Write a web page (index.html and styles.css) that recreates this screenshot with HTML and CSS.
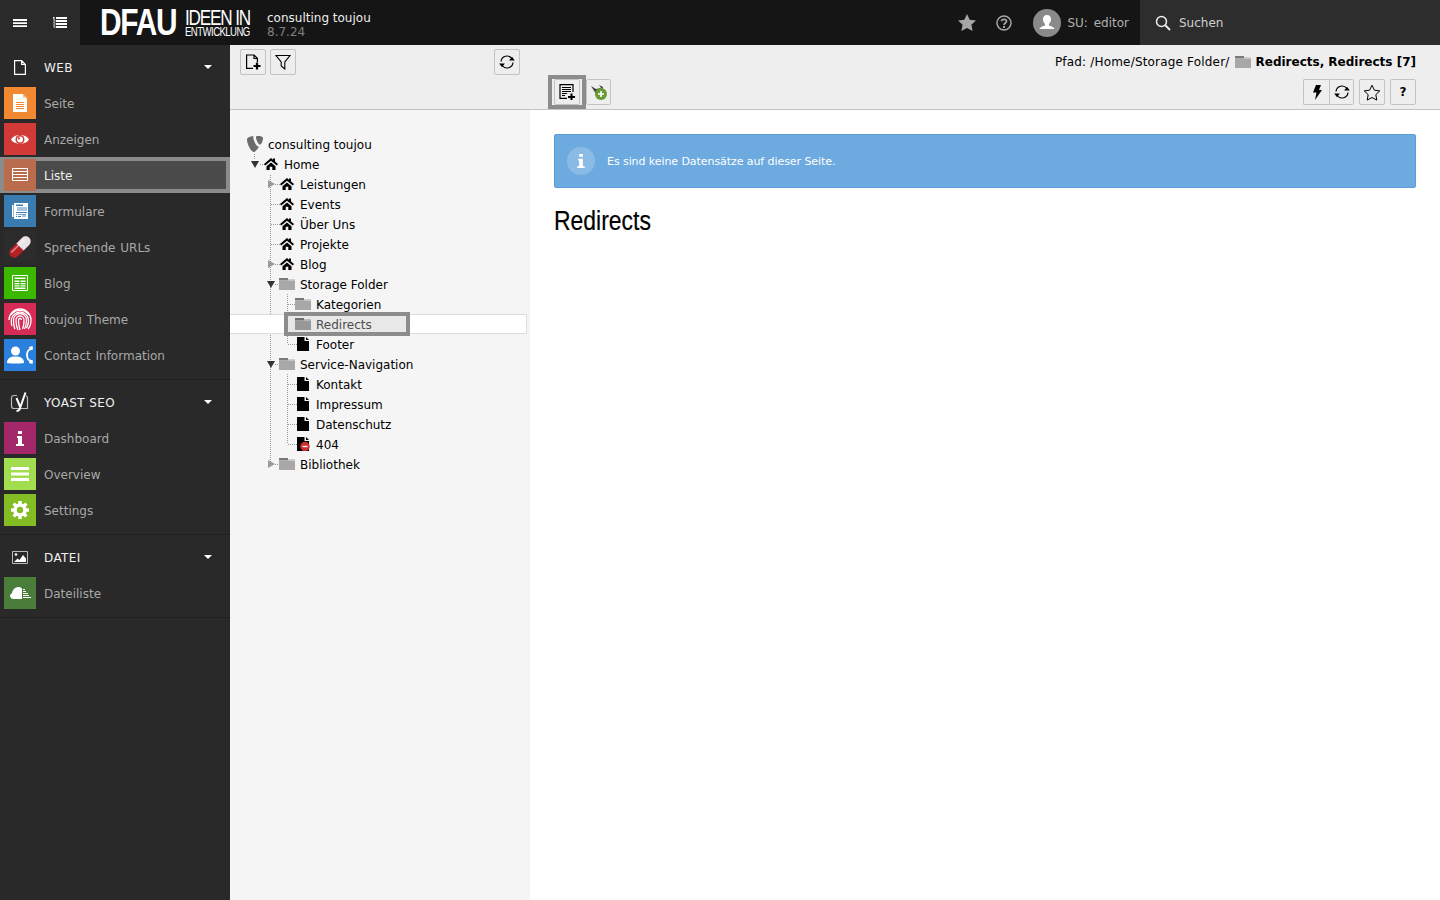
FILE: index.html
```html
<!DOCTYPE html>
<html lang="de">
<head>
<meta charset="utf-8">
<title>TYPO3 Liste</title>
<link rel="stylesheet" href="styles.css">
</head>
<body>
<svg class="defs" width="0" height="0">
  <defs>
    <symbol id="home" viewBox="0 0 14 12"><path fill="#000" d="M7 0 0 6l1.200 1.600L7 2.800l5.800 4.800L14 6l-3-2.600V.6H9v1.100z"/><path fill="#000" d="M2.500 8.200 7 4.400l4.500 3.800V12H8.300V8.800H5.700V12H2.500z"/></symbol>
    <symbol id="folder" viewBox="0 0 16 12"><path fill="#7a7a7a" d="M0 0h9v2.500H0z"/><path fill="#cfcfcf" d="M9 1h7v1.500H9z"/><path fill="#a8a8a8" d="M0 2.500h16V12H0z"/></symbol>
    <symbol id="page" viewBox="0 0 12 14"><path fill="#000" d="M0 0h7.500v4H12v10H0z"/><path fill="#000" d="M9 0l3 3H9z"/></symbol>
    <symbol id="sync" viewBox="0 0 16 16"><path fill="none" stroke="#000" stroke-width="1.200" d="M2 7.500A6 6 0 0 1 12.800 4.500M14 8.500A6 6 0 0 1 3.200 11.500"/><path fill="#000" d="M10.200 6.500h5.600L13 2.800zM.2 9.500h5.600L3 13.200z"/></symbol>
  </defs>
</svg>

<header class="topbar">
  <button class="toggle" type="button">
    <svg width="14" height="10" viewBox="0 0 14 10"><path fill="#fff" d="M0 1h14v2H0zM0 4.300h14v1.700H0zM0 7.300h14V9H0z"/></svg>
  </button>
  <button class="toggle" type="button">
    <svg width="14" height="14" viewBox="0 0 14 14"><path fill="#fff" d="M3 1h11v2H3zM3 4h11v2H3zM3 7h11v2H3zM3 10h11v2H3zM0 1h1.500v1H0zM.5 2v9h1v-9zM.5 4.500h2v1h-2zM.5 7.500h2v1h-2zM.5 10.500h2v1h-2z"/></svg>
  </button>
  <div class="logo">
    <span class="logo-main">DFAU</span>
    <span class="logo-side"><span class="logo-top">IDEEN IN</span><span class="logo-bottom">ENTWICKLUNG</span></span>
  </div>
  <div class="site">
    <span class="site-name">consulting toujou</span>
    <span class="site-version">8.7.24</span>
  </div>
  <div class="top-tools">
    <svg class="tool-star" width="18" height="17" viewBox="0 0 18 17"><path fill="#a6a6a6" d="M9 0l2.700 5.700 6.300.8-4.600 4.300 1.200 6.200L9 14l-5.600 3 1.200-6.200L0 6.500l6.300-.8z"/></svg>
    <svg class="tool-help" width="16" height="16" viewBox="0 0 16 16"><circle cx="8" cy="8" r="7" fill="none" stroke="#a6a6a6" stroke-width="1.500"/><path fill="none" stroke="#a6a6a6" stroke-width="1.700" d="M5.500 6.300C5.500 3.600 10.500 3.600 10.500 6.300 10.500 8 8 8 8 10"/><path fill="#a6a6a6" d="M7 11h2v2H7z"/></svg>
    <svg class="tool-avatar" width="28" height="28" viewBox="0 0 28 28"><circle cx="14" cy="14" r="14" fill="#8a8a8a"/><path fill="#fff" d="M14 6c-2.600 0-4 1.800-4 4.200 0 2 .8 3.600 2 4.600v1.700c-2 .8-5 1.300-5.500 3.500h15c-.5-2.200-3.500-2.700-5.500-3.500v-1.700c1.200-1 2-2.600 2-4.600C18 7.800 16.600 6 14 6z"/></svg>
    <span class="user">SU: editor</span>
  </div>
  <div class="search">
    <svg width="16" height="16" viewBox="0 0 16 16"><circle cx="6.500" cy="6.500" r="5" fill="none" stroke="#eee" stroke-width="1.500"/><path stroke="#eee" stroke-width="2" d="M10 10l5 5"/></svg>
    <span>Suchen</span>
  </div>
</header>

<div class="layout">
  <nav class="sidebar">
    <section class="group">
      <div class="group-head">
        <span class="head-icon"><svg width="12" height="15" viewBox="0 0 12 15"><path fill="none" stroke="#fff" stroke-width="1.200" d="M.600.600h7l3.800 3.800v10H.600zM7.600.600v3.800h3.800"/></svg></span>
        <span class="head-label">WEB</span><span class="caret"></span>
      </div>
      <div class="item">
        <span class="mod mod-seite"><svg width="14" height="18" viewBox="0 0 14 18"><path fill="#fff" d="M0 0h9.500L14 4.500V18H0z"/><path fill="#f3c39a" d="M10 0l4 4h-4z"/><path stroke="#f18933" d="M3 8.500h8M3 10.500h8M3 12.500h8M3 14.500h8"/></svg></span>
        <span class="label">Seite</span>
      </div>
      <div class="item">
        <span class="mod mod-anzeigen"><svg width="18" height="13" viewBox="0 0 20 14"><path fill="#fff" d="M0 7c4-6.500 16-6.500 20 0-4 6.500-16 6.500-20 0z"/><circle cx="10" cy="7" r="5" fill="#d13a37"/><circle cx="10" cy="7" r="3.300" fill="#fff"/><circle cx="8.800" cy="5.800" r="1.200" fill="#d13a37"/></svg></span>
        <span class="label">Anzeigen</span>
      </div>
      <div class="item item-active">
        <span class="mod mod-liste"><svg width="16" height="14" viewBox="0 0 16 14"><path fill="none" stroke="#fff" d="M.500.500h15v3H.500zM.500 3.500h15v3H.500zM.500 6.500h15v3H.500zM.500 9.500h15v3H.500z"/></svg></span>
        <span class="label">Liste</span>
      </div>
      <div class="item">
        <span class="mod mod-formulare"><svg width="16" height="16" viewBox="0 0 16 16"><path fill="#fff" d="M0 2h1.500v12H0zM2 0h14v16H2z"/><path fill="#3b7cb0" d="M4 1.500h7V3H4z"/><path fill="#a9c6de" d="M5 4h10v4H5zM10 12h4v2h-4z"/><path fill="#3b7cb0" d="M4 9h11v1H4zM6 11h8v.8H6zM4 11h1v1H4zM4 13h1v1H4zM6 13h3v1H6z"/></svg></span>
        <span class="label">Formulare</span>
      </div>
      <div class="item">
        <span class="mod mod-urls"><svg width="26" height="26" viewBox="0 0 26 26"><g transform="rotate(-45 13 13)"><rect x="0" y="8" width="26" height="10" rx="5" fill="#b52025"/><path fill="#e6e6e6" d="M13 8h8a5 5 0 0 1 0 10h-8z"/><path fill="#fff" opacity=".5" d="M3 10h18v1.500H3z"/></g></svg></span>
        <span class="label">Sprechende URLs</span>
      </div>
      <div class="item">
        <span class="mod mod-blog"><svg width="16" height="16" viewBox="0 0 16 16"><path fill="none" stroke="#fff" d="M.500.500h15v15H.500z"/><path fill="#fff" d="M2.500 2.500h11V4h-11zM2.500 5.500h5V7h-5zM2.500 8h5v1.300h-5zM2.500 10.300h5v1.300h-5zM8.500 5.500h5V7h-5zM8.500 8h5v1.300h-5zM8.500 10.300h5v1.300h-5zM2.500 12.500h11V14h-11z"/></svg></span>
        <span class="label">Blog</span>
      </div>
      <div class="item">
        <span class="mod mod-toujou"><svg width="26" height="26" viewBox="0 0 26 26"><g fill="none" stroke="#fff" stroke-width="1.300"><path d="M4 9a11 11 0 0 1 18 0"/><path d="M2 14a11 11 0 0 1 22 0c0 4-1 7-3 9"/><path d="M5 20c-1-2-1-4-.500-7a8.600 8.600 0 0 1 17 1c0 3-.500 6-2 8"/><path d="M8 23c-1.500-3-1.500-6-1.500-9a6.500 6.500 0 0 1 13 0c0 3-.500 6-2 9"/><path d="M11 24c-1.500-3-2-6-2-10a4 4 0 0 1 8 0c0 4-.500 7-1.500 9"/><path d="M13 24c-1-3-1.500-6-1.500-10a1.500 1.500 0 0 1 3 0"/></g></svg></span>
        <span class="label">toujou Theme</span>
      </div>
      <div class="item">
        <span class="mod mod-contact"><svg width="26" height="18" viewBox="0 0 26 18"><circle cx="8.500" cy="5" r="4.500" fill="#fff"/><path fill="#fff" d="M0 17c0-5 3.500-6.500 8.500-6.500S17 12 17 17c-5 .8-12 .8-17 0z"/><path fill="none" stroke="#fff" stroke-width="1.800" d="M23.500 3c-2.500 1-3.500 3.500-3.500 6s1 5 3.500 6"/><path fill="#fff" d="M22 1l3.500-1 .5 3.500-3 1zM22 17l3.500 1 .5-3.500-3-1z"/></svg></span>
        <span class="label">Contact Information</span>
      </div>
    </section>

    <section class="group">
      <div class="group-head">
        <span class="head-icon"><svg width="20" height="20" viewBox="0 0 20 20"><path fill="none" stroke="#bbb" stroke-width="1.200" d="M7 3.500H4a2.500 2.500 0 0 0-2.500 2.500v8A2.500 2.500 0 0 0 4 16.500h13.500V6a2.500 2.500 0 0 0-1.500-2.300"/><path fill="none" stroke="#fff" stroke-width="2" d="M6.500 6l3.500 8.500M15.500.500L9.500 17.500c-.500 1-1.500 1.500-3 1.500"/></svg></span>
        <span class="head-label">YOAST SEO</span><span class="caret"></span>
      </div>
      <div class="item">
        <span class="mod mod-dash"><svg width="8" height="15" viewBox="0 0 8 15"><path fill="#fff" d="M2 0h4v3H2zM1 5h5v8h2v2H0v-2h2V7H1z"/></svg></span>
        <span class="label">Dashboard</span>
      </div>
      <div class="item">
        <span class="mod mod-overview"><svg width="18" height="14" viewBox="0 0 18 14"><path fill="#fff" d="M0 0h18v3H0zM0 5.500h18v3H0zM0 11h18v3H0z"/></svg></span>
        <span class="label">Overview</span>
      </div>
      <div class="item">
        <span class="mod mod-settings"><svg width="18" height="18" viewBox="0 0 18 18"><circle cx="9" cy="9" r="5" fill="none" stroke="#fff" stroke-width="3.600"/><path stroke="#fff" stroke-width="3.400" d="M9 0v3.500M9 14.500V18M0 9h3.500M14.500 9H18M2.600 2.600l2.500 2.500M12.900 12.900l2.500 2.500M15.400 2.600l-2.500 2.500M5.100 12.900l-2.500 2.500"/></svg></span>
        <span class="label">Settings</span>
      </div>
    </section>

    <section class="group">
      <div class="group-head">
        <span class="head-icon"><svg width="16" height="13" viewBox="0 0 16 13"><path fill="none" stroke="#bbb" d="M.500.500h15v12H.500z"/><circle cx="4" cy="3.500" r="1.300" fill="#fff"/><path fill="#fff" d="M2 11l3.500-3.500 2 1.500 3.500-5 3 3.500V11z"/></svg></span>
        <span class="head-label">DATEI</span><span class="caret"></span>
      </div>
      <div class="item">
        <span class="mod mod-datei"><svg width="21" height="12" viewBox="0 0 21 12"><path fill="#fff" d="M3 12a3 3 0 0 1-1-5.800C2.500 2 6 0 8.500 0c1.500 0 2.500.500 3.500 1.500V12z"/><path stroke="#fff" d="M13 2.500h2M13 4.500h3M13 6.500h5M13 8.500h6M13 10.500h8"/></svg></span>
        <span class="label">Dateiliste</span>
      </div>
    </section>
  </nav>

  <main class="main">
    <div class="docheader">
      <div class="tree-tools">
        <button class="btn" type="button"><svg width="16" height="16" viewBox="0 0 16 16"><path fill="none" stroke="#000" stroke-width="1.200" d="M8 14.400H1.600V1h7.500l3.300 3.300V8M9 1v3.500h3.500"/><path stroke="#000" stroke-width="2.200" d="M8.500 12h7M12 8.500v7"/></svg></button>
        <button class="btn" type="button"><svg width="16" height="16" viewBox="0 0 16 16"><path fill="none" stroke="#000" stroke-width="1.100" d="M1 1.500h14L9.800 8v7l-3.600-3V8z"/></svg></button>
        <button class="btn btn-refresh" type="button"><svg width="16" height="16"><use href="#sync"/></svg></button>
      </div>
      <div class="doc-tools">
        <div class="path">
          <span class="path-text">Pfad: /Home/Storage Folder/</span>
          <svg width="16" height="12"><use href="#folder"/></svg>
          <strong>Redirects, Redirects [7]</strong>
        </div>
        <div class="doc-buttons">
          <span class="btn-focus">
            <button class="btn" type="button"><svg width="16" height="16" viewBox="0 0 16 16"><path fill="none" stroke="#000" stroke-width="1.200" d="M8 14.400H1V.6h13V8"/><path stroke="#000" d="M3 3.500h9M3 5.500h9M3 7.500h9M3 9.500h5M3 11.500h3"/><path stroke="#000" stroke-width="2" d="M9 13h7M12.500 9.500v7"/></svg></button>
          </span>
          <button class="btn btn-narrow" type="button"><svg width="18" height="16" viewBox="0 0 18 16"><path fill="#444" d="M1 2l5 3 5-1-2-3 4 2-1 4-3 3H6z"/><circle cx="11" cy="10" r="6" fill="#6a9a35"/><path stroke="#fff" stroke-width="1.600" d="M8 10h6M11 7v6"/></svg></button>
          <span class="spacer"></span>
          <span class="btn-join">
            <button class="btn" type="button"><svg width="10" height="15" viewBox="0 0 10 15"><path fill="#000" d="M4 0h5L7 5h3L3 15l1.500-7.500H1z"/></svg></button>
            <button class="btn btn-narrow" type="button"><svg width="16" height="16"><use href="#sync"/></svg></button>
          </span>
          <button class="btn" type="button"><svg width="18" height="17" viewBox="0 0 18 17"><path fill="none" stroke="#000" d="M9 1.200l2.400 5 5.400.7-4 3.800 1 5.400L9 13.500l-4.800 2.600 1-5.400-4-3.800 5.400-.7z"/></svg></button>
          <button class="btn btn-help" type="button">?</button>
        </div>
      </div>
    </div>

    <div class="body">
      <aside class="tree">
        <svg class="tree-lines" width="300" height="360" viewBox="0 0 300 360">
          <g fill="none" stroke="#999" stroke-dasharray="1 1">
            <path d="M24.500 20v6"/>
            <path d="M30 30.500h5"/>
            <path d="M40.500 41v289"/>
            <path d="M45 50.500h6M41 70.500h10M41 90.500h10M41 110.500h10M45 130.500h6M45 150.500h6M45 230.500h6M45 330.500h6"/>
            <path d="M57.500 160v50M57.500 240v70"/>
            <path d="M58 170.500h9M58 190.500h9M58 210.500h9M58 250.500h9M58 270.500h9M58 290.500h9M58 310.500h9"/>
          </g>
        </svg>
        <div class="node lv0">
          <span class="node-icon"><svg width="16" height="16" viewBox="0 0 16 16"><path fill="#6b6b6b" d="M12 10.500c-.300.100-.500.100-.800.100-2 0-5-7-5-9.300 0-.900.200-1.100.500-1.300C4.300.300 1.200 1.200.200 2.500 0 2.800 0 3.200 0 3.800 0 7.500 3.900 16 6.700 16c1.300 0 3.500-2.100 5.300-5.500zM10.700 0c2.600 0 5.300.400 5.300 1.900 0 3-1.900 6.700-2.900 6.700C11.400 8.600 9 3.700 9 1.500 9 .400 9.400 0 10.700 0z"/></svg></span>
          <span class="label">consulting toujou</span>
        </div>
        <div class="node lv1">
          <span class="arrow arrow-open"></span>
          <span class="node-icon"><svg width="14" height="12"><use href="#home"/></svg></span>
          <span class="label">Home</span>
        </div>
        <div class="node lv2">
          <span class="arrow arrow-closed"></span>
          <span class="node-icon"><svg width="14" height="12"><use href="#home"/></svg></span>
          <span class="label">Leistungen</span>
        </div>
        <div class="node lv2">
          <span class="arrow"></span>
          <span class="node-icon"><svg width="14" height="12"><use href="#home"/></svg></span>
          <span class="label">Events</span>
        </div>
        <div class="node lv2">
          <span class="arrow"></span>
          <span class="node-icon"><svg width="14" height="12"><use href="#home"/></svg></span>
          <span class="label">Über Uns</span>
        </div>
        <div class="node lv2">
          <span class="arrow"></span>
          <span class="node-icon"><svg width="14" height="12"><use href="#home"/></svg></span>
          <span class="label">Projekte</span>
        </div>
        <div class="node lv2">
          <span class="arrow arrow-closed"></span>
          <span class="node-icon"><svg width="14" height="12"><use href="#home"/></svg></span>
          <span class="label">Blog</span>
        </div>
        <div class="node lv2">
          <span class="arrow arrow-open"></span>
          <span class="node-icon"><svg width="16" height="12"><use href="#folder"/></svg></span>
          <span class="label">Storage Folder</span>
        </div>
        <div class="node lv3">
          <span class="arrow"></span>
          <span class="node-icon"><svg width="16" height="12"><use href="#folder"/></svg></span>
          <span class="label">Kategorien</span>
        </div>
        <div class="node lv3 node-selected">
          <span class="arrow"></span>
          <span class="node-icon"><svg width="16" height="12"><use href="#folder"/></svg></span>
          <span class="label">Redirects</span>
          <span class="select-box"></span>
        </div>
        <div class="node lv3">
          <span class="arrow"></span>
          <span class="node-icon"><svg width="12" height="14"><use href="#page"/></svg></span>
          <span class="label">Footer</span>
        </div>
        <div class="node lv2">
          <span class="arrow arrow-open"></span>
          <span class="node-icon"><svg width="16" height="12"><use href="#folder"/></svg></span>
          <span class="label">Service-Navigation</span>
        </div>
        <div class="node lv3">
          <span class="arrow"></span>
          <span class="node-icon"><svg width="12" height="14"><use href="#page"/></svg></span>
          <span class="label">Kontakt</span>
        </div>
        <div class="node lv3">
          <span class="arrow"></span>
          <span class="node-icon"><svg width="12" height="14"><use href="#page"/></svg></span>
          <span class="label">Impressum</span>
        </div>
        <div class="node lv3">
          <span class="arrow"></span>
          <span class="node-icon"><svg width="12" height="14"><use href="#page"/></svg></span>
          <span class="label">Datenschutz</span>
        </div>
        <div class="node lv3">
          <span class="arrow"></span>
          <span class="node-icon"><svg width="16" height="14" viewBox="0 0 16 14"><use href="#page" x="2" width="12" height="14"/><circle cx="10" cy="9.500" r="4.700" fill="#cf2e2e"/><path stroke="#fff" stroke-width="1.400" d="M7.500 9.500h5"/></svg></span>
          <span class="label">404</span>
        </div>
        <div class="node lv2">
          <span class="arrow arrow-closed"></span>
          <span class="node-icon"><svg width="16" height="12"><use href="#folder"/></svg></span>
          <span class="label">Bibliothek</span>
        </div>
      </aside>

      <section class="content">
        <div class="callout">
          <span class="callout-icon"><svg width="8" height="14" viewBox="0 0 8 15"><path fill="#fff" d="M2 0h4v3H2zM1 5h5v8h2v2H0v-2h2V7H1z"/></svg></span>
          <span class="label callout-text">Es sind keine Datensätze auf dieser Seite.</span>
        </div>
        <h1 class="title">Redirects</h1>
      </section>
    </div>
  </main>
</div>
</body>
</html>
```

FILE: styles.css
```css
* { box-sizing: border-box; }

html, body {
  margin: 0;
  height: 900px;
  overflow: hidden;
}

body {
  font: 12px/20px "DejaVu Sans", Verdana, sans-serif;
  color: #000;
  background: #fff;
}

.defs { position: absolute; }

button {
  font: inherit;
  padding: 0;
  cursor: pointer;
}

.label { padding-top: 2px; }

/* top bar */
.topbar {
  display: flex;
  align-items: center;
  height: 45px;
  background: #151515;
}

.toggle {
  display: flex;
  align-items: center;
  justify-content: center;
  width: 40px;
  height: 45px;
  border: 0;
  background: #2a2a2a;
}

.logo {
  display: flex;
  align-items: center;
  flex: 0 0 167px;
  min-width: 0;
  margin-left: 20px;
  padding-top: 1px;
  color: #fff;
  font-family: "Liberation Sans", sans-serif;
  white-space: nowrap;
}

.logo-main {
  flex: 0 0 76px;
  min-width: 0;
  font-size: 36px;
  line-height: 36px;
  font-weight: 700;
  letter-spacing: -1.500px;
  transform: scaleX(.83);
  transform-origin: left center;
}

.logo-side {
  display: flex;
  flex-direction: column;
  flex: 0 0 65px;
  min-width: 0;
  margin-left: 9px;
}

.logo-top {
  font-size: 22px;
  line-height: 18px;
  letter-spacing: -1.500px;
  transform: scaleX(.78);
  transform-origin: left center;
}

.logo-bottom {
  font-size: 12px;
  line-height: 10px;
  letter-spacing: -.700px;
  transform: scaleX(.8);
  transform-origin: left center;
}

.site {
  display: flex;
  flex-direction: column;
  padding-top: 4px;
  line-height: 14px;
}

.site-name { color: #eee; }
.site-version { color: #808080; }

.top-tools {
  display: flex;
  align-items: center;
  margin-left: auto;
  height: 45px;
  padding-right: 11px;
  color: #b0b0b0;
}

.tool-help { margin-left: 20px; }
.tool-avatar { margin-left: 21px; }

.user {
  margin-left: 6px;
  word-spacing: 2px;
}

.search {
  display: flex;
  align-items: center;
  gap: 8px;
  width: 300px;
  height: 45px;
  padding-left: 15px;
  background: #2d2d2d;
  color: #d0d0d0;
}

/* layout */
.layout {
  display: flex;
  height: 855px;
}

.sidebar {
  flex: 0 0 230px;
  background: #292929;
  color: #a8a8a8;
  word-spacing: 1px;
}

.group {
  padding: 4px 0 6px;
  border-bottom: 1px solid #1f1f1f;
}

.group-head, .item {
  display: flex;
  align-items: center;
  height: 36px;
}

.group-head { color: #f0f0f0; }

.head-icon {
  display: flex;
  align-items: center;
  justify-content: center;
  width: 32px;
  margin: 0 8px 0 4px;
}

.head-label {
  flex: 1;
  padding-top: 2px;
  letter-spacing: .4px;
  word-spacing: 0;
}

.caret {
  width: 0;
  height: 0;
  margin-right: 18px;
  border: 4px solid transparent;
  border-top-color: #fff;
  border-bottom-width: 0;
}

.mod {
  display: flex;
  align-items: center;
  justify-content: center;
  flex: 0 0 32px;
  height: 32px;
  margin: 0 8px 0 4px;
}

.item-active {
  background: #4b4b4b;
  box-shadow: inset 0 0 0 4px #8c8c8c;
  color: #eee;
}

.mod-seite { background: #f18933; }
.mod-anzeigen { background: #d13a37; }
.mod-liste { background: #b96d4d; }
.mod-formulare { background: #3b7cb0; }
.mod-urls { background: #2c2c2c; }
.mod-blog { background: #3bb700; }
.mod-toujou { background: #d62b55; }
.mod-contact { background: #2a80dc; }
.mod-dash { background: #a4276a; }
.mod-overview { background: #a1dd4f; }
.mod-settings { background: #84bc24; }
.mod-datei { background: #4a7d3a; }

/* main */
.main {
  flex: 1;
  display: flex;
  flex-direction: column;
  min-width: 0;
}

.docheader {
  display: flex;
  flex: 0 0 65px;
  background: #eee;
  border-bottom: 1px solid #c3c3c3;
}

.btn {
  display: inline-flex;
  align-items: center;
  justify-content: center;
  width: 26px;
  height: 26px;
  border: 1px solid #c3c3c3;
  border-radius: 2px;
  background: #eee;
  color: #000;
}

.tree-tools {
  display: flex;
  gap: 4px;
  flex: 0 0 300px;
  align-items: flex-start;
  padding: 4px 10px 0;
}

.btn-refresh { margin-left: auto; }

.doc-tools {
  flex: 1;
  display: flex;
  flex-direction: column;
  padding: 7px 24px 0;
}

.path {
  display: flex;
  justify-content: flex-end;
  align-items: center;
  gap: 5px;
  height: 20px;
  line-height: 20px;
}

.path-text { letter-spacing: .18px; }

.doc-buttons {
  display: flex;
  align-items: flex-start;
  gap: 5px;
  margin-top: 7px;
}

.btn-focus {
  display: flex;
  position: relative;
  margin-right: 1px;
}

.btn-focus::after {
  content: "";
  position: absolute;
  inset: -4px -6px;
  border: 4px solid #8c8c8c;
}

.btn-narrow { width: 25px; }

.spacer { flex: 1; }

.btn-join { display: flex; }

.btn-join .btn:first-child {
  border-right: 0;
  border-radius: 2px 0 0 2px;
}

.btn-join .btn:last-child { border-radius: 0 2px 2px 0; }

.btn-help { font-weight: 700; }

.body {
  flex: 1;
  display: flex;
  min-height: 0;
}

/* page tree */
.tree {
  position: relative;
  flex: 0 0 300px;
  padding-top: 24px;
  background: #f5f5f5;
}

.tree-lines {
  position: absolute;
  top: 24px;
  left: 0;
}

.node {
  position: relative;
  display: flex;
  align-items: center;
  height: 20px;
}

.lv0 { padding-left: 17px; }
.lv1 { padding-left: 17px; }
.lv2 { padding-left: 33px; }
.lv3 { padding-left: 49px; }

.node-icon {
  display: flex;
  align-items: center;
  justify-content: center;
  flex: 0 0 16px;
  margin-right: 5px;
}

.arrow {
  display: flex;
  align-items: center;
  justify-content: center;
  flex: 0 0 16px;
  height: 16px;
}

.arrow-open::before {
  content: "";
  border: 4px solid transparent;
  border-top: 7px solid #333;
  border-bottom: 0;
}

.arrow-closed::before {
  content: "";
  border: 4px solid transparent;
  border-left: 7px solid #999;
  border-right: 0;
}

.node-selected {
  width: 297px;
  background: #fff;
  box-shadow: inset 0 1px 0 #ddd, inset 0 -1px 0 #ddd, inset -1px 0 0 #ddd;
  color: #555;
}

.select-box {
  position: absolute;
  left: 54px;
  top: -2px;
  width: 126px;
  height: 24px;
  border: 4px solid #8c8c8c;
  background: rgba(0, 0, 0, .09);
}

/* content */
.content {
  flex: 1;
  min-width: 0;
  padding: 24px;
  background: #fff;
}

.callout {
  display: flex;
  align-items: center;
  gap: 12px;
  height: 54px;
  padding-left: 12px;
  background: #6daae0;
  border: 1px solid #5d9cd6;
  border-radius: 2px;
  color: #fff;
  font-size: 11px;
}

.callout-text { letter-spacing: -.07px; }

.callout-icon {
  display: flex;
  align-items: center;
  justify-content: center;
  width: 28px;
  height: 28px;
  border-radius: 50%;
  background: rgba(255, 255, 255, .2);
}

.title {
  margin: 18px 0 0;
  font: 400 27px/30px "Liberation Sans", sans-serif;
  -webkit-text-stroke: .2px #000;
  transform: scaleX(.85);
  transform-origin: left center;
}
```
